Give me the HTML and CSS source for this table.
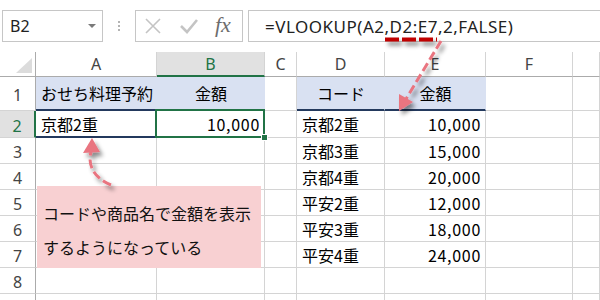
FILE: index.html
```html
<!DOCTYPE html>
<html lang="ja">
<head>
    <meta charset="UTF-8">
    <title>VLOOKUP</title>
    <link rel="stylesheet" href="styles.css">
</head>
<body>
    <div class="toolbar">
        <div class="namebox"><span>B2</span><span class="drop"></span></div>
        <div class="grip"><i></i><i></i><i></i></div>
        <div class="fxbtns">
            <svg class="btn" width="20" height="20" viewBox="0 0 20 20"><path d="M3 3 L17 17 M17 3 L3 17" stroke="#c4c4c4" stroke-width="1.6" fill="none"/></svg>
            <svg class="btn" width="20" height="20" viewBox="0 0 20 20"><path d="M2 10 L8 16 L18 4" stroke="#c4c4c4" stroke-width="2.6" fill="none"/></svg>
            <span class="fx">fx</span>
        </div>
        <div class="formula">=VLOOKUP(A2,D2:E7,2,FALSE)</div>
    </div>

    <div class="sheet">
        <div class="corner"><span class="tri"></span></div>
        <div class="col">A</div>
        <div class="col active">B</div>
        <div class="col">C</div>
        <div class="col">D</div>
        <div class="col">E</div>
        <div class="col">F</div>
        <div class="col"></div>

        <div class="row">1</div>
        <div class="cell head">おせち料理予約</div>
        <div class="cell head center">金額</div>
        <div class="cell"></div>
        <div class="cell head center">コード</div>
        <div class="cell head center">金額</div>
        <div class="cell"></div>
        <div class="cell"></div>

        <div class="row active">2</div>
        <div class="cell key">京都2重</div>
        <div class="cell num selected">10,000<span class="handle"></span></div>
        <div class="cell"></div>
        <div class="cell">京都2重</div>
        <div class="cell num">10,000</div>
        <div class="cell"></div>
        <div class="cell"></div>

        <div class="row">3</div>
        <div class="cell"></div>
        <div class="cell"></div>
        <div class="cell"></div>
        <div class="cell">京都3重</div>
        <div class="cell num">15,000</div>
        <div class="cell"></div>
        <div class="cell"></div>

        <div class="row">4</div>
        <div class="cell"></div>
        <div class="cell"></div>
        <div class="cell"></div>
        <div class="cell">京都4重</div>
        <div class="cell num">20,000</div>
        <div class="cell"></div>
        <div class="cell"></div>

        <div class="row">5</div>
        <div class="cell"></div>
        <div class="cell"></div>
        <div class="cell"></div>
        <div class="cell">平安2重</div>
        <div class="cell num">12,000</div>
        <div class="cell"></div>
        <div class="cell"></div>

        <div class="row">6</div>
        <div class="cell"></div>
        <div class="cell"></div>
        <div class="cell"></div>
        <div class="cell">平安3重</div>
        <div class="cell num">18,000</div>
        <div class="cell"></div>
        <div class="cell"></div>

        <div class="row">7</div>
        <div class="cell"></div>
        <div class="cell"></div>
        <div class="cell"></div>
        <div class="cell">平安4重</div>
        <div class="cell num">24,000</div>
        <div class="cell"></div>
        <div class="cell"></div>

        <div class="row">8</div>
        <div class="cell"></div>
        <div class="cell"></div>
        <div class="cell"></div>
        <div class="cell"></div>
        <div class="cell"></div>
        <div class="cell"></div>
        <div class="cell"></div>

        <div class="row">9</div>
        <div class="cell"></div>
        <div class="cell"></div>
        <div class="cell"></div>
        <div class="cell"></div>
        <div class="cell"></div>
        <div class="cell"></div>
        <div class="cell"></div>
    </div>

    <div class="note">
        コードや商品名で金額を表示<br>
        するようになっている
    </div>

    <!-- dashed pointers drawn over the sheet -->
    <svg class="marks" width="600" height="300" viewBox="0 0 600 300">
        <defs>
            <filter id="shade" x="-50%" y="-50%" width="200%" height="200%">
                <feDropShadow dx="3" dy="4" stdDeviation="2" flood-color="#000" flood-opacity="0.45"/>
            </filter>
        </defs>
        <g filter="url(#shade)">
            <path d="M385 39.5 L437 39.5" stroke="#c00000" stroke-width="4" stroke-dasharray="14 3" fill="none"/>
            <path d="M441 41 L406 99" stroke="#e97580" stroke-width="3" stroke-dasharray="9 4" fill="none"/>
            <polygon points="399,111 399,94 413,102" fill="#e97580"/>
            <path d="M111 185 C 96 179 87 167 91 152" stroke="#e97580" stroke-width="3" stroke-dasharray="9 4" fill="none"/>
            <polygon points="92,138 83,153 100,152" fill="#e97580"/>
        </g>
    </svg>
</body>
</html>
```

FILE: styles.css
```css
:root {
    --grid: #d4d4d4;
    --edge: #ababab;
    --green: #217346;
    --navy: #23395d;
    --lavender: #d9e1f2;
    --pink: #f8d0d2;
}
body {
    margin: 0;
    width: 600px;
    height: 300px;
    overflow: hidden;
    position: relative;
    background: #fff;
    font-family: "Noto Sans", sans-serif;
    color: #000;
}
.toolbar {
    display: flex;
    height: 32px;
    padding: 10px 0 0 2px;
}
.namebox {
    width: 101px;
    box-sizing: border-box;
    border: 1px solid #c6c6c6;
    display: flex;
    align-items: center;
    justify-content: space-between;
    padding: 0 6px 0 7px;
    font-size: 16px;
    color: #222;
}
.drop {
    width: 0;
    height: 0;
    border-left: 4px solid transparent;
    border-right: 4px solid transparent;
    border-top: 4px solid #7a7a7a;
}
.grip {
    width: 32px;
    display: flex;
    flex-direction: column;
    align-items: center;
    justify-content: center;
    gap: 2px;
}
.grip i {
    width: 2px;
    height: 2px;
    background: #b4b4b4;
}
.fxbtns {
    width: 108px;
    box-sizing: border-box;
    border: 1px solid #c6c6c6;
    display: flex;
    align-items: center;
    padding-left: 7px;
    gap: 16px;
}
.btn {
    flex: none;
}
.fx {
    font-family: "Liberation Serif", serif;
    font-style: italic;
    font-size: 22px;
    color: #6d6d6d;
    margin-top: -3px;
}
.formula {
    flex: 1;
    margin-left: 5px;
    margin-right: -2px;
    border: 1px solid #c6c6c6;
    display: flex;
    align-items: center;
    padding-left: 16px;
    font-size: 17px;
    letter-spacing: 0.5px;
    color: #222;
}
.sheet {
    margin-top: 10px;
    display: grid;
    grid-template-columns: 36px 121px 108px 32px 88px 101px 87px 1fr;
    grid-template-rows: 25px 34px 27px repeat(7, 26px);
}
.sheet > div {
    box-sizing: border-box;
    border-right: 1px solid var(--grid);
    border-bottom: 1px solid var(--grid);
    display: flex;
    align-items: center;
}
.corner {
    justify-content: flex-end;
    align-items: flex-end !important;
    padding: 0 3px 3px 0;
    border-right-color: var(--edge) !important;
    border-bottom-color: var(--edge) !important;
}
.tri {
    width: 16px;
    height: 15px;
    background: #dcdcdc;
    clip-path: polygon(100% 0, 100% 100%, 0 100%);
}
.col {
    justify-content: center;
    font-size: 16px;
    color: #444;
    border-bottom-color: var(--edge) !important;
}
.col.active {
    background: #e1e1e1;
    color: var(--green);
    border-bottom: 2px solid var(--green) !important;
}
.row {
    justify-content: center;
    font-size: 16px;
    color: #444;
    border-right-color: var(--edge) !important;
    padding-top: 3px;
}
.row.active {
    background: #e1e1e1;
    color: var(--green);
    border-right: 2px solid var(--green) !important;
}
.cell {
    font-family: "Noto Sans CJK JP", sans-serif;
    font-size: 16px;
    padding: 0 4px 0 5px;
    white-space: nowrap;
    position: relative;
}
.cell.head {
    background: var(--lavender);
    border-bottom: 2px solid var(--navy) !important;
    border-right-color: var(--lavender) !important;
}
.cell.center {
    justify-content: center;
}
.cell.num {
    justify-content: flex-end;
    letter-spacing: 0.7px;
}
.cell.key {
    border-bottom: 2px solid var(--navy) !important;
}
.cell.selected::after {
    content: "";
    position: absolute;
    top: -2px;
    left: -2px;
    right: -1px;
    bottom: -1px;
    border: 2px solid var(--green);
}
.handle {
    position: absolute;
    right: -4px;
    bottom: -4px;
    width: 5px;
    height: 5px;
    background: var(--green);
    border: 1px solid #fff;
    z-index: 2;
}
.note {
    position: absolute;
    left: 37px;
    top: 186px;
    width: 224px;
    height: 82px;
    box-sizing: border-box;
    background: var(--pink);
    padding: 10px 0 0 6px;
    font-family: "Noto Sans CJK JP", sans-serif;
    font-size: 16px;
    line-height: 34px;
    color: #111;
}
.marks {
    position: absolute;
    left: 0;
    top: 0;
    pointer-events: none;
}
```
